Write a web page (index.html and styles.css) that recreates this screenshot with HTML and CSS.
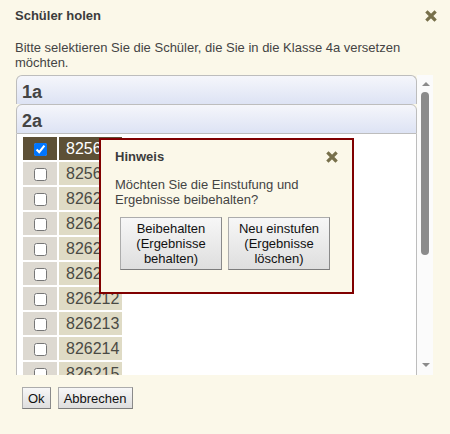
FILE: index.html
```html
<!DOCTYPE html>
<html lang="de">
<head>
<meta charset="utf-8">
<title>Schüler holen</title>
<link rel="stylesheet" href="styles.css">
</head>
<body>
<div class="dialog">
  <div class="titlebar">
    <span class="title">Schüler holen</span>
    <span class="close"><svg viewBox="0 0 12 12"><path d="M2.5 2.5L9.5 9.5M9.5 2.5L2.5 9.5" stroke="#77704b" stroke-width="3.2" stroke-linecap="square" fill="none"/></svg></span>
  </div>
  <p class="intro">Bitte selektieren Sie die Schüler, die Sie in die Klasse 4a versetzen möchten.</p>
  <div class="list">
    <div class="viewport">
      <div class="acc-header first">1a</div>
      <div class="acc-header second">2a</div>
      <div class="acc-content">
        <table class="pupils">
          <tr class="selected"><td class="cb"><input type="checkbox" checked></td><td class="num">825601</td></tr>
          <tr><td class="cb"><input type="checkbox"></td><td class="num">825602</td></tr>
          <tr><td class="cb"><input type="checkbox"></td><td class="num">826208</td></tr>
          <tr><td class="cb"><input type="checkbox"></td><td class="num">826209</td></tr>
          <tr><td class="cb"><input type="checkbox"></td><td class="num">826210</td></tr>
          <tr><td class="cb"><input type="checkbox"></td><td class="num">826211</td></tr>
          <tr><td class="cb"><input type="checkbox"></td><td class="num">826212</td></tr>
          <tr><td class="cb"><input type="checkbox"></td><td class="num">826213</td></tr>
          <tr><td class="cb"><input type="checkbox"></td><td class="num">826214</td></tr>
          <tr><td class="cb"><input type="checkbox"></td><td class="num">826215</td></tr>
        </table>
      </div>
    </div>
    <div class="scrollbar">
      <span class="arrow up"></span>
      <span class="track"><span class="thumb"></span></span>
      <span class="arrow down"></span>
    </div>
  </div>
  <div class="actions">
    <button class="btn">Ok</button>
    <button class="btn">Abbrechen</button>
  </div>
</div>

<div class="modal">
  <div class="modal-head">
    <span class="title">Hinweis</span>
    <span class="close"><svg viewBox="0 0 12 12"><path d="M2.5 2.5L9.5 9.5M9.5 2.5L2.5 9.5" stroke="#77704b" stroke-width="3.2" stroke-linecap="square" fill="none"/></svg></span>
  </div>
  <p class="modal-text">Möchten Sie die Einstufung und Ergebnisse beibehalten?</p>
  <div class="modal-actions">
    <button class="btn big">Beibehalten<br>(Ergebnisse<br>behalten)</button>
    <button class="btn big">Neu einstufen<br>(Ergebnisse<br>löschen)</button>
  </div>
</div>
</body>
</html>
```
FILE: styles.css
```css
html, body {
  margin: 0;
  padding: 0;
}
body {
  width: 450px;
  height: 434px;
  overflow: hidden;
  position: relative;
  background: #fbf8e9;
  font-family: "Liberation Sans", Arial, sans-serif;
  font-size: 13px;
  line-height: 15px;
  color: #444;
}
.titlebar {
  display: flex;
  justify-content: space-between;
  align-items: center;
  height: 15px;
  padding: 8px 13px 0 15px;
}
.title {
  font-weight: bold;
  color: #3c3c3c;
}
.close svg {
  display: block;
  width: 12px;
  height: 12px;
}
.intro {
  margin: 17px 14px 0 15px;
}
.list {
  display: flex;
  margin: 5px 0 0 16px;
  width: 417px;
  height: 300px;
}
.viewport {
  width: 401px;
  height: 300px;
  overflow: hidden;
}
.scrollbar {
  width: 16px;
  height: 300px;
  display: flex;
  flex-direction: column;
  align-items: center;
  background: #fbfbfb;
}
.arrow {
  display: block;
  width: 0;
  height: 0;
  border-left: 4px solid transparent;
  border-right: 4px solid transparent;
  margin-left: 2px;
}
.arrow.up {
  border-bottom: 4px solid #8b8b8b;
  margin-top: 7px;
  margin-bottom: 5px;
}
.arrow.down {
  border-top: 4px solid #8b8b8b;
  margin-top: 4px;
  margin-bottom: 8px;
}
.track {
  display: flex;
  flex-direction: column;
  flex: 1;
  padding-top: 1px;
}
.thumb {
  display: block;
  width: 8px;
  height: 163px;
  border-radius: 4px;
  background: #8b8b8b;
}
.acc-header {
  box-sizing: border-box;
  border: 1px solid #bdbdbd;
  border-bottom: 0;
  border-radius: 6px 6px 0 0;
  background: linear-gradient(#f5f6fb, #dde3f4);
  font-size: 18px;
  font-weight: bold;
  line-height: 22px;
  color: #444;
  padding: 5px 0 0 5px;
}
.acc-header.first {
  height: 29px;
}
.acc-header.second {
  height: 30px;
  border-bottom: 1px solid #bdbdbd;
}
.acc-content {
  border-left: 1px solid #bdbdbd;
  border-right: 1px solid #bdbdbd;
  background: #fff;
  padding: 1px 4px 2px 4px;
}
.pupils {
  border-collapse: separate;
  border-spacing: 2px;
}
.pupils td {
  padding: 0;
  height: 23px;
}
.pupils .cb {
  width: 34px;
  text-align: center;
  background: #ddd9d1;
}
.pupils .num {
  width: 56px;
  padding-left: 7px;
  font-size: 16px;
  color: #4a4a44;
  background: #dfdbc5;
}
.pupils .selected td {
  background: #5d5036;
  color: #fff;
}
.pupils input {
  margin: 0;
  width: 13px;
  height: 13px;
  vertical-align: middle;
}
.actions {
  display: flex;
  gap: 7px;
  margin: 12px 0 0 22px;
}
.btn {
  font-family: "Liberation Sans", Arial, sans-serif;
  font-size: 13px;
  line-height: 15px;
  color: #111;
  height: 22px;
  padding: 0 5px;
  margin: 0;
  border: 1px solid #acacac;
  border-right-color: #8a8a8a;
  border-bottom-color: #7c7c7c;
  border-radius: 0;
  background: linear-gradient(#f7f7f7, #dedede);
}
.modal {
  position: absolute;
  left: 99px;
  top: 138px;
  width: 255px;
  height: 156px;
  box-sizing: border-box;
  border: 2px solid #800000;
  background: #fbf8e9;
  padding: 9px 14px 0 14px;
}
.modal-head {
  display: flex;
  justify-content: space-between;
  align-items: center;
  height: 15px;
}
.modal-text {
  margin: 13px 0 0;
}
.modal-actions {
  display: flex;
  gap: 6px;
  margin: 10px 0 0 5px;
}
.btn.big {
  width: 102px;
  height: 53px;
  padding: 3px 0;
}
```
